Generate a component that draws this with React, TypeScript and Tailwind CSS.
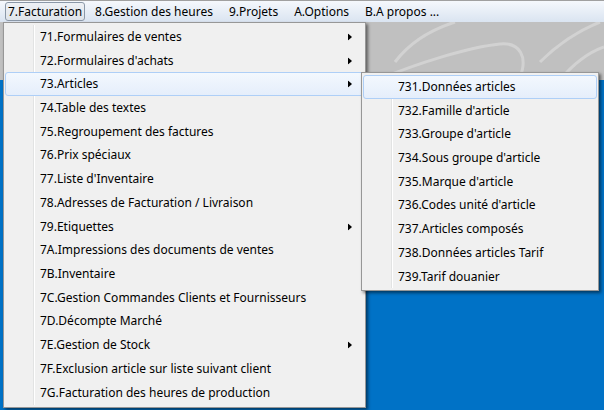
import React from "react";

type Item = { label: string; sub?: boolean; active?: boolean };

const mainItems: Item[] = [
  { label: "71.Formulaires de ventes", sub: true },
  { label: "72.Formulaires d'achats", sub: true },
  { label: "73.Articles", sub: true, active: true },
  { label: "74.Table des textes" },
  { label: "75.Regroupement des factures" },
  { label: "76.Prix spéciaux" },
  { label: "77.Liste d'Inventaire" },
  { label: "78.Adresses de Facturation / Livraison" },
  { label: "79.Etiquettes", sub: true },
  { label: "7A.Impressions des documents de ventes" },
  { label: "7B.Inventaire" },
  { label: "7C.Gestion Commandes Clients et Fournisseurs" },
  { label: "7D.Décompte Marché" },
  { label: "7E.Gestion de Stock", sub: true },
  { label: "7F.Exclusion article sur liste suivant client" },
  { label: "7G.Facturation des heures de production" },
];

const subItems: Item[] = [
  { label: "731.Données articles", active: true },
  { label: "732.Famille d'article" },
  { label: "733.Groupe d'article" },
  { label: "734.Sous groupe d'article" },
  { label: "735.Marque d'article" },
  { label: "736.Codes unité d'article" },
  { label: "737.Articles composés" },
  { label: "738.Données articles Tarif" },
  { label: "739.Tarif douanier" },
];

const Arrow = () => (
  <svg width="4" height="7" viewBox="0 0 4 7" className="absolute right-[11px] top-1/2 -translate-y-1/2">
    <path d="M0 0 L4 3.5 L0 7 Z" fill="#000" />
  </svg>
);

const Menu = ({ items, className }: { items: Item[]; className: string }) => (
  <div
    className={`absolute bg-[#f0f0f0] border border-[#979797] py-[2px] shadow-[2px_2px_3px_rgba(0,0,0,0.5)] ${className}`}
  >
    {/* gouttière des icônes */}
    <div className="absolute left-[29px] top-[2px] bottom-[2px] w-[2px] border-l border-[#e2e3e3] bg-white" />
    {items.map((it) => (
      <div
        key={it.label}
        className={`relative mx-[1px] flex h-[23.73px] items-center rounded-[3px] border pl-[34px] ${
          it.active
            ? "border-[#aecff7] bg-gradient-to-b from-[#f3f8fe] to-[#e5eefb]"
            : "border-transparent"
        }`}
      >
        <span className="relative text-[12px] text-black">{it.label}</span>
        {it.sub && <Arrow />}
      </div>
    ))}
  </div>
);

export default function App() {
  return (
    <div className="relative h-[410px] w-[604px] overflow-hidden font-['Noto_Sans','Open_Sans',sans-serif]">
      {/* barre de menus */}
      <div className="flex h-[22px] items-center border-t border-[#a0a0a0] bg-gradient-to-b from-[#f5f8fc] to-[#dae4f1] pl-[5px] text-[12px] text-black">
        <div className="rounded-[3px] border border-[#8b98a8] bg-gradient-to-b from-[#eef1f5] to-[#dfe4ea] px-[2px] leading-[17px]">
          7.Facturation
        </div>
        <div className="ml-[8px] px-[2px]">8.Gestion des heures</div>
        <div className="ml-[12px] px-[2px]">9.Projets</div>
        <div className="ml-[12px] px-[2px]">A.Options</div>
        <div className="ml-[12px] px-[2px]">B.A propos ...</div>
      </div>

      {/* fond de la fenêtre */}
      <div className="flex h-[388px] flex-col">
        <div className="relative h-[58px] bg-[#c0c0c0]">
          <svg width="604" height="58" className="absolute inset-0">
            <g fill="none" stroke="#d2d2d2" strokeWidth="3">
              <path d="M395 40 C410 20 430 8 455 0" />
              <path d="M372 60 C420 40 470 25 500 22 C520 20 528 35 520 55" />
              <path d="M540 40 C560 20 580 8 600 0" />
              <path d="M560 58 C575 40 590 30 604 25" />
            </g>
          </svg>
        </div>
        <div className="flex-1 bg-[#0072c6]" />
      </div>

      <Menu items={mainItems} className="left-[3px] top-[22px] w-[363px]" />
      <Menu items={subItems} className="left-[361px] top-[72px] w-[238px]" />
    </div>
  );
}
